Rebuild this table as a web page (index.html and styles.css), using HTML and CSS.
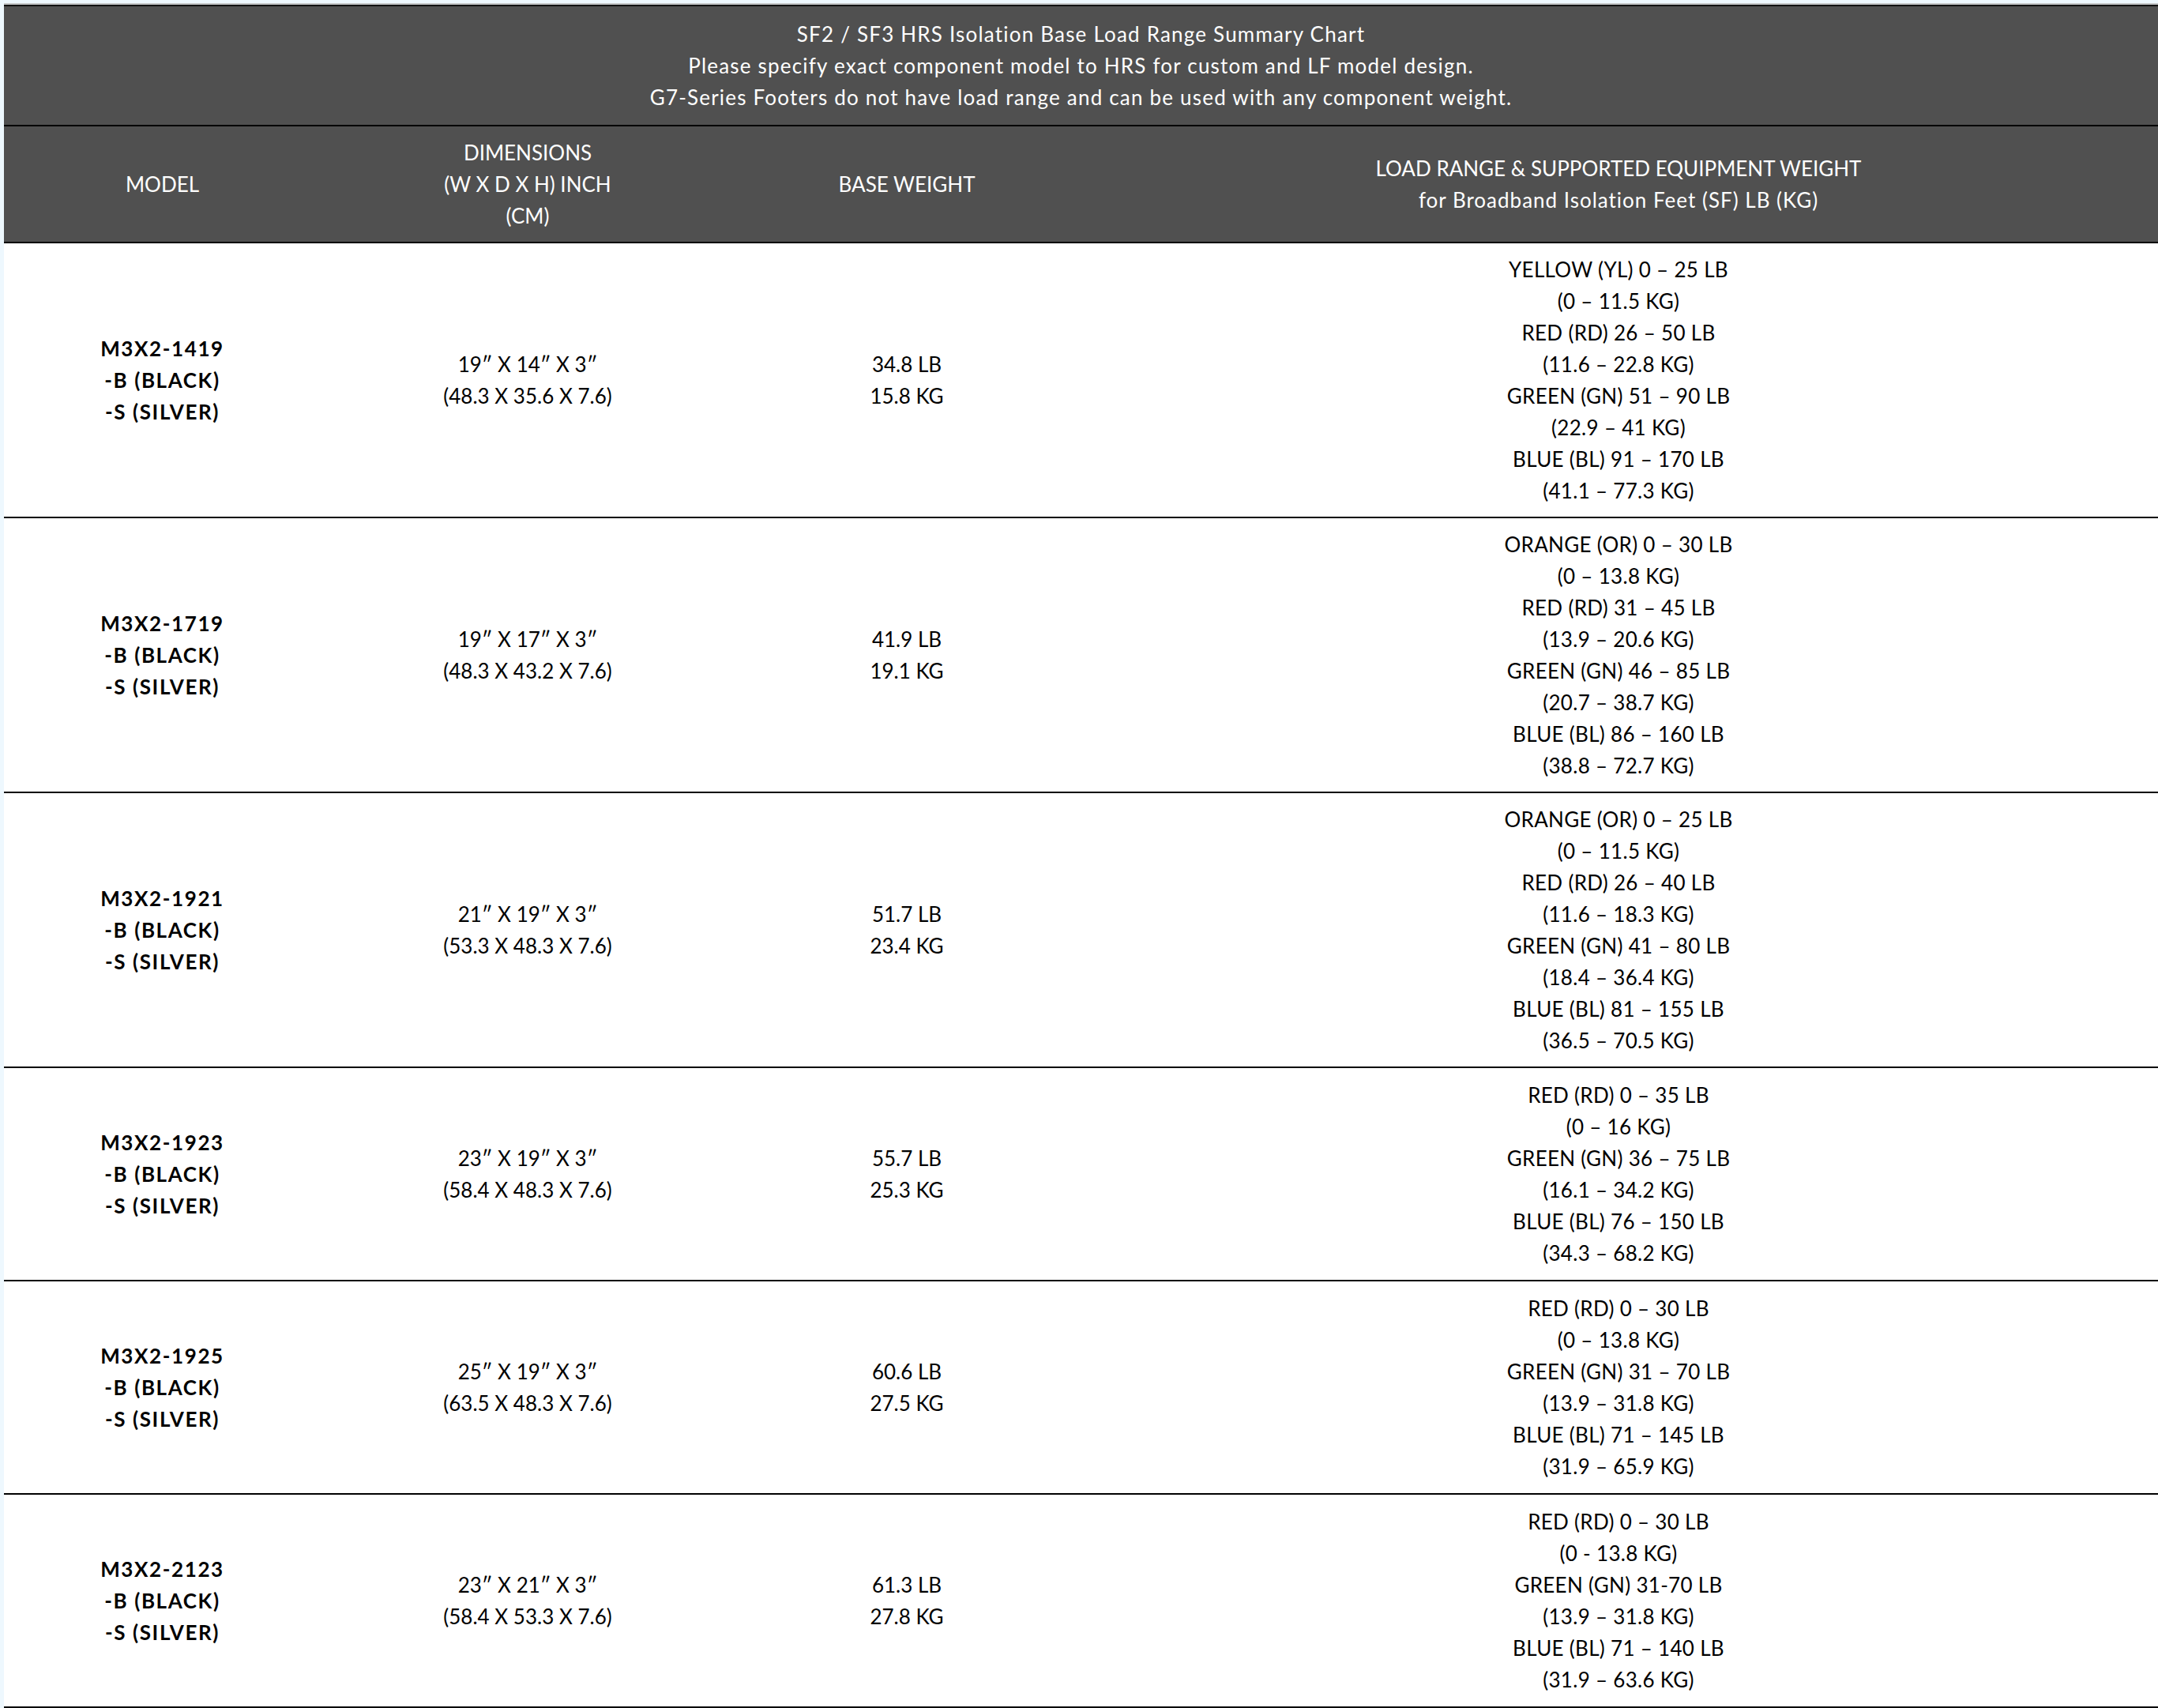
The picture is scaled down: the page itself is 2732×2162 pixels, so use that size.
FILE: index.html
```html
<!DOCTYPE html>
<html lang="en">
<head>
<meta charset="utf-8">
<title>SF2 / SF3 HRS Isolation Base Load Range Summary Chart</title>
<link rel="stylesheet" href="styles.css">
</head>
<body>
<div class="page">
  <div class="chart-wrap">
    <table class="chart">
      <colgroup>
        <col class="c-model">
        <col class="c-dim">
        <col class="c-weight">
        <col class="c-load">
      </colgroup>
      <thead>
        <tr class="title-row">
          <th colspan="4">SF2 / SF3 HRS Isolation Base Load Range Summary Chart<br>Please specify exact component model to HRS for custom and LF model design.<br>G7-Series Footers do not have load range and can be used with any component weight.</th>
        </tr>
        <tr class="head-row">
          <th>MODEL</th>
          <th>DIMENSIONS<br>(W X D X H) INCH<br>(CM)</th>
          <th>BASE WEIGHT</th>
          <th>LOAD RANGE &amp; SUPPORTED EQUIPMENT WEIGHT<br><span class="sub">for Broadband Isolation Feet (SF) LB (KG)</span></th>
        </tr>
      </thead>
      <tbody>
        <tr>
          <td class="model">M3X2-1419<br>-B (BLACK)<br>-S (SILVER)</td>
          <td>19″ X 14″ X 3″<br>(48.3 X 35.6 X 7.6)</td>
          <td>34.8 LB<br>15.8 KG</td>
          <td class="load">YELLOW (YL) 0 – 25 LB<br>(0 – 11.5 KG)<br>RED (RD) 26 – 50 LB<br>(11.6 – 22.8 KG)<br>GREEN (GN) 51 – 90 LB<br>(22.9 – 41 KG)<br>BLUE (BL) 91 – 170 LB<br>(41.1 – 77.3 KG)</td>
        </tr>
        <tr>
          <td class="model">M3X2-1719<br>-B (BLACK)<br>-S (SILVER)</td>
          <td>19″ X 17″ X 3″<br>(48.3 X 43.2 X 7.6)</td>
          <td>41.9 LB<br>19.1 KG</td>
          <td class="load">ORANGE (OR) 0 – 30 LB<br>(0 – 13.8 KG)<br>RED (RD) 31 – 45 LB<br>(13.9 – 20.6 KG)<br>GREEN (GN) 46 – 85 LB<br>(20.7 – 38.7 KG)<br>BLUE (BL) 86 – 160 LB<br>(38.8 – 72.7 KG)</td>
        </tr>
        <tr>
          <td class="model">M3X2-1921<br>-B (BLACK)<br>-S (SILVER)</td>
          <td>21″ X 19″ X 3″<br>(53.3 X 48.3 X 7.6)</td>
          <td>51.7 LB<br>23.4 KG</td>
          <td class="load">ORANGE (OR) 0 – 25 LB<br>(0 – 11.5 KG)<br>RED (RD) 26 – 40 LB<br>(11.6 – 18.3 KG)<br>GREEN (GN) 41 – 80 LB<br>(18.4 – 36.4 KG)<br>BLUE (BL) 81 – 155 LB<br>(36.5 – 70.5 KG)</td>
        </tr>
        <tr class="short">
          <td class="model">M3X2-1923<br>-B (BLACK)<br>-S (SILVER)</td>
          <td>23″ X 19″ X 3″<br>(58.4 X 48.3 X 7.6)</td>
          <td>55.7 LB<br>25.3 KG</td>
          <td class="load">RED (RD) 0 – 35 LB<br>(0 – 16 KG)<br>GREEN (GN) 36 – 75 LB<br>(16.1 – 34.2 KG)<br>BLUE (BL) 76 – 150 LB<br>(34.3 – 68.2 KG)</td>
        </tr>
        <tr class="short">
          <td class="model">M3X2-1925<br>-B (BLACK)<br>-S (SILVER)</td>
          <td>25″ X 19″ X 3″<br>(63.5 X 48.3 X 7.6)</td>
          <td>60.6 LB<br>27.5 KG</td>
          <td class="load">RED (RD) 0 – 30 LB<br>(0 – 13.8 KG)<br>GREEN (GN) 31 – 70 LB<br>(13.9 – 31.8 KG)<br>BLUE (BL) 71 – 145 LB<br>(31.9 – 65.9 KG)</td>
        </tr>
        <tr class="short">
          <td class="model">M3X2-2123<br>-B (BLACK)<br>-S (SILVER)</td>
          <td>23″ X 21″ X 3″<br>(58.4 X 53.3 X 7.6)</td>
          <td>61.3 LB<br>27.8 KG</td>
          <td class="load">RED (RD) 0 – 30 LB<br>(0 - 13.8 KG)<br>GREEN (GN) 31-70 LB<br>(13.9 – 31.8 KG)<br>BLUE (BL) 71 – 140 LB<br>(31.9 – 63.6 KG)</td>
        </tr>
      </tbody>
    </table>
  </div>
</div>
</body>
</html>
```

FILE: styles.css
```css
html, body {
  margin: 0;
  padding: 0;
}

body {
  background: #eef8fe;
  font-family: Lato, "Open Sans", "Liberation Sans", sans-serif;
  color: #000;
}

.page {
  padding-top: 4px;
  padding-left: 5px;
}

.chart-wrap {
  border-top: 2px solid #c4c6c7;
  background: #fff;
}

.chart {
  width: 2727px;
  border-collapse: collapse;
  table-layout: fixed;
  border-top: 2px solid #111;
}

.c-model { width: 401px; }
.c-dim { width: 524px; }
.c-weight { width: 436px; }
.c-load { width: 1366px; }

.chart th,
.chart td {
  text-align: center;
  vertical-align: middle;
  font-size: 26px;
  line-height: 40px;
  padding: 13px 10px;
  border-bottom: 2px solid #000;
}

.chart th {
  background: #505050;
  color: #fff;
  font-weight: 400;
}

.title-row th {
  padding-top: 15px;
  padding-bottom: 15px;
  letter-spacing: 1.2px;
}

.head-row .sub {
  letter-spacing: 1px;
}

.chart td {
  background: #fff;
  color: #000;
  font-weight: 400;
}

.chart td.load {
  letter-spacing: 0.3px;
}

.chart .short td {
  padding-top: 14px;
  padding-bottom: 14px;
}

.chart td.model {
  font-weight: 700;
  letter-spacing: 1.6px;
}
```
